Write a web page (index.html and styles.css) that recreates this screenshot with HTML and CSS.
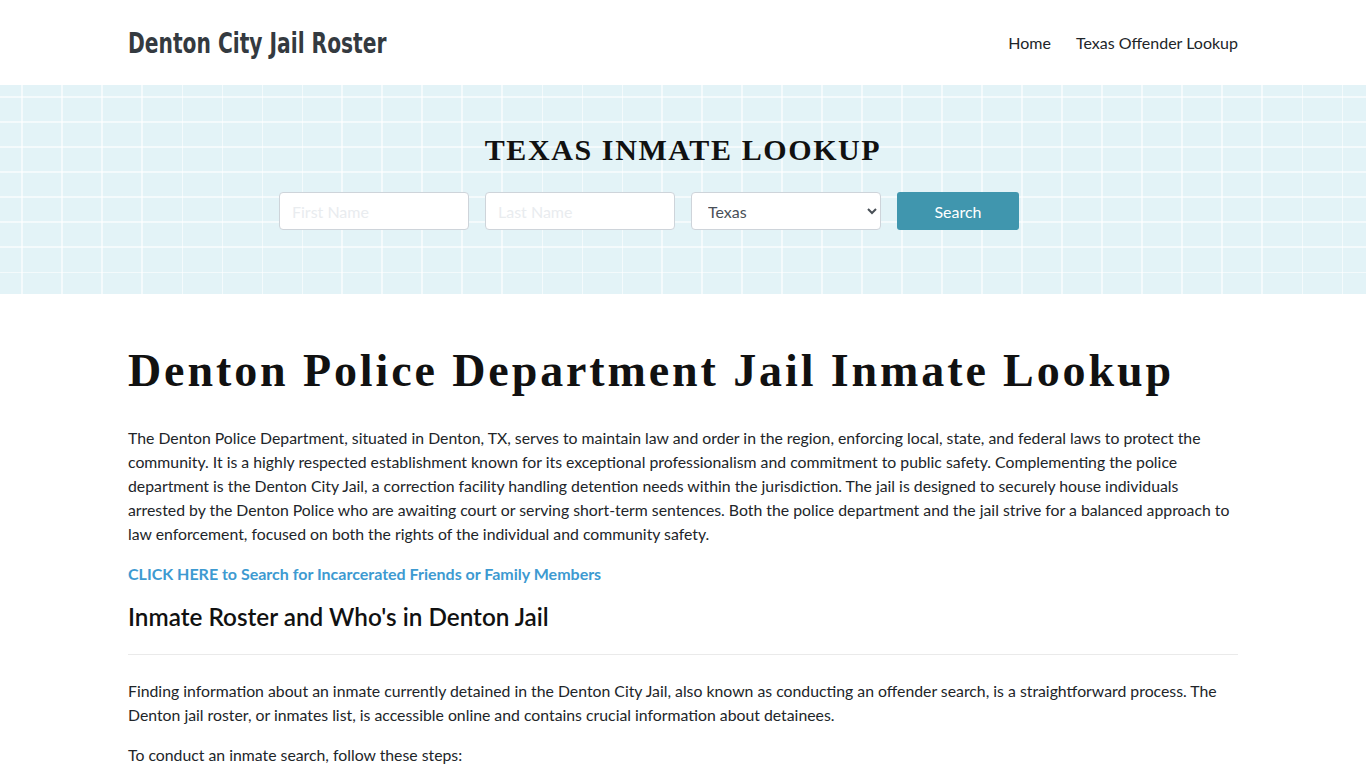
FILE: index.html
```html
<!DOCTYPE html>
<html lang="en">
<head>
<meta charset="utf-8">
<title>Denton City Jail Roster</title>
<link rel="stylesheet" href="styles.css">
</head>
<body>
<header class="site-header">
  <div class="container header-row">
    <a class="brand" href="#"><span class="brand-text">Denton City Jail Roster</span></a>
    <nav class="nav">
      <a href="#">Home</a>
      <a href="#">Texas Offender Lookup</a>
    </nav>
  </div>
</header>
<section class="banner">
  <h2 class="banner-title">TEXAS INMATE LOOKUP</h2>
  <form class="search-form">
    <input class="field" type="text" placeholder="First Name">
    <input class="field" type="text" placeholder="Last Name">
    <select class="field select">
      <option>Texas</option>
    </select>
    <button class="btn" type="button">Search</button>
  </form>
</section>
<main class="container content">
  <h1 class="page-title">Denton Police Department Jail Inmate Lookup</h1>
  <p>The Denton Police Department, situated in Denton, TX, serves to maintain law and order in the region, enforcing local, state, and federal laws to protect the community. It is a highly respected establishment known for its exceptional professionalism and commitment to public safety. Complementing the police department is the Denton City Jail, a correction facility handling detention needs within the jurisdiction. The jail is designed to securely house individuals arrested by the Denton Police who are awaiting court or serving short-term sentences. Both the police department and the jail strive for a balanced approach to law enforcement, focused on both the rights of the individual and community safety.</p>
  <p><a class="cta" href="#">CLICK HERE to Search for Incarcerated Friends or Family Members</a></p>
  <h2 class="section-title">Inmate Roster and Who's in Denton Jail</h2>
  <hr class="rule">
  <p>Finding information about an inmate currently detained in the Denton City Jail, also known as conducting an offender search, is a straightforward process. The Denton jail roster, or inmates list, is accessible online and contains crucial information about detainees.</p>
  <p>To conduct an inmate search, follow these steps:</p>
</main>
</body>
</html>
```
FILE: styles.css
```css
* { box-sizing: border-box; }
html, body { margin: 0; padding: 0; }
body {
  font-family: Lato, "Open Sans", sans-serif;
  color: #212529;
  background: #fff;
  font-size: 15.8px;
  line-height: 24px;
}
a { text-decoration: none; }
.container {
  width: 1110px;
  margin: 0 auto;
}
.site-header { height: 85px; }
.header-row {
  height: 85px;
  display: flex;
  align-items: center;
  justify-content: space-between;
}
.brand {
  font-family: "DejaVu Sans Condensed", "DejaVu Sans", sans-serif;
  font-weight: 700;
  font-size: 29px;
  color: #343a40;
  width: 260px;
  white-space: nowrap;
}
.brand-text {
  display: inline-block;
  transform: scaleX(0.775);
  transform-origin: left center;
}
.nav {
  display: flex;
  gap: 25px;
  padding-top: 1px;
}
.nav a {
  color: #212529;
  font-size: 16px;
}
.banner {
  height: 209px;
  background-color: #e3f3f7;
  background-image:
    repeating-linear-gradient(90deg, transparent 0 21.5px, rgba(255,255,255,0.6) 21.5px 23px, transparent 23px 40px),
    repeating-linear-gradient(180deg, transparent 0 11.5px, rgba(255,255,255,0.6) 11.5px 13px, transparent 13px 25px);
  display: flex;
  flex-direction: column;
  align-items: center;
  padding-top: 48px;
}
.banner-title {
  margin: 0;
  font-family: "Liberation Serif", serif;
  font-weight: 700;
  font-size: 30px;
  line-height: 34px;
  letter-spacing: 1.6px;
  color: #111;
}
.search-form {
  display: flex;
  gap: 16px;
  margin-top: 25px;
  margin-right: 68px;
}
.field {
  width: 190px;
  height: 38px;
  border: 1px solid #ced4da;
  border-radius: 4px;
  background: #fff;
  padding: 0 12px;
  font-family: Lato, sans-serif;
  font-size: 16px;
  color: #495057;
}
.field::placeholder { color: #e9ecef; }
.select { padding: 0 8px 0 12px; }
.btn {
  width: 122px;
  height: 38px;
  border: 0;
  border-radius: 3px;
  background: #4096ae;
  color: #fff;
  font-family: Lato, sans-serif;
  font-size: 16px;
}
.content { padding-top: 52px; }
.page-title {
  margin: 0 0 30px;
  font-family: "Liberation Serif", serif;
  font-weight: 700;
  font-size: 46px;
  line-height: 50px;
  letter-spacing: 2.9px;
  color: #111;
}
.content p { margin: 0 0 16px; }
.cta {
  color: #3d9ad1;
  font-weight: 700;
  font-size: 16px;
}
.section-title {
  margin: 0;
  font-family: Lato, sans-serif;
  font-weight: 600;
  font-size: 24.3px;
  line-height: 30px;
  color: #111;
}
.rule {
  border: 0;
  border-top: 1px solid #eaeaea;
  margin: 22px 0 24px;
}
```
